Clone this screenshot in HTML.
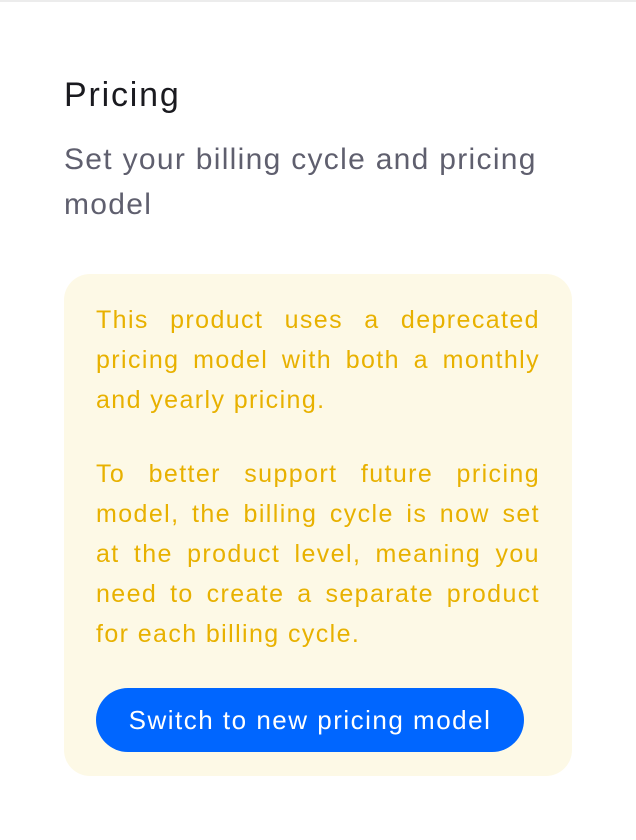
<!DOCTYPE html>
<html><head><style>
html,body{margin:0;padding:0;background:#fff;}
body{width:636px;height:840px;border-top:2px solid #ececec;box-sizing:border-box;font-family:"Liberation Sans",sans-serif;position:relative;}
h1{position:absolute;left:64px;top:71px;margin:0;font-size:34px;font-weight:500;color:#1a1a1f;line-height:44px;letter-spacing:1.8px;}
.sub{position:absolute;left:64px;top:135px;width:560px;margin:0;font-size:30px;color:#5f5f6e;line-height:45px;letter-spacing:1.3px;}
.card{position:absolute;left:64px;top:272px;width:508px;height:502px;background:#fdf9e6;border-radius:26px;}
.blk{position:absolute;left:32px;width:444px;font-size:25px;line-height:40px;color:#e8b100;letter-spacing:1.4px;}
.j{text-align:justify;text-align-last:justify;white-space:nowrap;}
.btn{position:absolute;left:32px;top:414px;width:428px;height:64px;border-radius:32px;background:#0066ff;color:#fff;font-size:26px;line-height:64px;text-align:center;letter-spacing:1.5px;}
</style></head><body>
<h1>Pricing</h1>
<p class="sub">Set your billing cycle and pricing<br>model</p>
<div class="card">
<div class="blk" style="top:26px"><div class="j">This product uses a deprecated</div><div class="j">pricing model with both a monthly</div><div>and yearly pricing.</div></div>
<div class="blk" style="top:180px"><div class="j">To better support future pricing</div><div class="j">model, the billing cycle is now set</div><div class="j">at the product level, meaning you</div><div class="j">need to create a separate product</div><div>for each billing cycle.</div></div>
<div class="btn">Switch to new pricing model</div>
</div>
</body></html>
